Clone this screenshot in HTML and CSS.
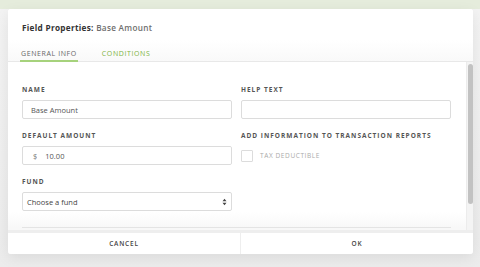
FILE: index.html
```html
<!DOCTYPE html>
<html lang="en">
<head>
    <meta charset="UTF-8">
    <meta name="viewport" content="width=device-width, initial-scale=1.0">
    <title>Field Properties</title>
    <link rel="stylesheet" href="styles.css">
</head>
<body>
<div class="backdrop">
    <div class="modal">
        <div class="modal-header">
            <h2><strong>Field Properties:</strong> Base Amount</h2>
            <div class="tabs">
                <span class="tab active">General Info</span>
                <span class="tab">Conditions</span>
            </div>
        </div>

        <div class="modal-body">
            <div class="content">
                <div class="form-grid">
                    <div class="form-group">
                        <label for="name">Name</label>
                        <input type="text" id="name" value="Base Amount">
                    </div>
                    <div class="form-group">
                        <label for="help">Help Text</label>
                        <input type="text" id="help" value="">
                    </div>
                    <div class="form-group">
                        <label for="amount">Default Amount</label>
                        <div class="money">
                            <span class="currency">$</span>
                            <input type="text" id="amount" value="10.00">
                        </div>
                    </div>
                    <div class="form-group">
                        <label>Add Information to Transaction Reports</label>
                        <div class="check">
                            <span class="box"></span>
                            <span class="check-text">Tax Deductible</span>
                        </div>
                    </div>
                    <div class="form-group">
                        <label for="fund">Fund</label>
                        <div class="select">
                            <span>Choose a fund</span>
                            <svg width="5" height="8" viewBox="0 0 5 8"><path d="M0.5 3.2 L2.5 0.8 L4.5 3.2 Z M0.5 4.8 L2.5 7.2 L4.5 4.8 Z" fill="#444"/></svg>
                        </div>
                    </div>
                </div>
                <div class="divider"></div>
            </div>
            <div class="scrollbar"><div class="thumb"></div></div>
        </div>

        <div class="modal-footer">
            <button type="button">Cancel</button>
            <button type="button">OK</button>
        </div>
    </div>
</div>
</body>
</html>
```

FILE: styles.css
```css
* {
    box-sizing: border-box;
}

body {
    margin: 0;
    font-family: 'Open Sans', sans-serif;
    background-color: #f1f1f1;
    width: 480px;
    height: 267px;
    overflow: hidden;
}

.backdrop {
    height: 267px;
    padding: 9px 7px 0 8px;
    background: linear-gradient(#e5ecdc 0, #e5ecdc 9px, #f3f3f3 9px, #ececec 100%);
}

.modal {
    width: 465px;
    height: 245px;
    background-color: #ffffff;
    border-radius: 3px;
    box-shadow: 0 4px 14px rgba(0, 0, 0, 0.08);
    display: flex;
    flex-direction: column;
    overflow: hidden;
}

.modal-header {
    height: 53px;
    padding: 13px 0 0 14px;
    border-bottom: 1px solid #e8e8e8;
    background: linear-gradient(#ffffff 60%, #f9f9f9);
}

h2 {
    margin: 0;
    font-size: 8.2px;
    line-height: 12px;
    font-weight: 600;
    color: #6e6e6e;
    letter-spacing: 0.3px;
}

h2 strong {
    color: #333333;
    font-weight: 700;
}

.tabs {
    display: flex;
    gap: 23px;
    margin-top: 15px;
    margin-left: -2px;
}

.tab {
    font-size: 7px;
    line-height: 10px;
    text-transform: uppercase;
    letter-spacing: 0.6px;
    color: #7cb342;
    padding: 0 1px 1px;
    border-bottom: 2px solid transparent;
}

.tab.active {
    color: #666666;
    border-bottom-color: #a6d27c;
}

.modal-body {
    flex: 1;
    display: flex;
}

.content {
    flex: 1;
    padding: 23px 15px 0 14px;
    background: linear-gradient(#ffffff 150px, #f8f8f8 166px);
}

.form-grid {
    display: grid;
    grid-template-columns: 210px 210px;
    column-gap: 9px;
    row-gap: 12px;
}

.form-group label {
    display: block;
    font-size: 6.5px;
    line-height: 10px;
    font-weight: 700;
    text-transform: uppercase;
    letter-spacing: 1px;
    color: #555555;
    margin-bottom: 5px;
    white-space: nowrap;
}

.form-group input {
    display: block;
    width: 100%;
    height: 19px;
    border: 1px solid #dcdcdc;
    border-radius: 2px;
    padding: 0 8px;
    font-family: 'Open Sans', sans-serif;
    font-size: 7.5px;
    color: #555555;
    outline: none;
}

.money {
    display: flex;
    align-items: center;
    height: 19px;
    border: 1px solid #dcdcdc;
    border-radius: 2px;
    padding-left: 10px;
}

.currency {
    font-size: 7.5px;
    color: #777777;
}

.money input {
    border: none;
    height: 17px;
    padding: 0 0 0 8px;
}

.check {
    display: flex;
    align-items: center;
    gap: 7px;
    height: 19px;
}

.box {
    width: 12px;
    height: 12px;
    border: 1px solid #dcdcdc;
    border-radius: 1px;
}

.check-text {
    font-size: 6.5px;
    text-transform: uppercase;
    letter-spacing: 0.6px;
    color: #aaaaaa;
}

.select {
    display: flex;
    align-items: center;
    justify-content: space-between;
    height: 19px;
    border: 1px solid #dcdcdc;
    border-radius: 2px;
    padding: 0 4px;
    font-size: 7.5px;
    color: #444444;
}

.divider {
    height: 1px;
    background-color: #e4e4e4;
    margin-top: 16px;
}

.scrollbar {
    width: 7px;
    margin-right: 1px;
    padding: 2px 0 0 1px;
    background-color: #f4f4f4;
    border-left: 1px solid #ececec;
}

.thumb {
    width: 5px;
    height: 140px;
    border-radius: 3px;
    background-color: #c2c2c2;
}

.modal-footer {
    display: grid;
    grid-template-columns: 1fr 1fr;
    column-gap: 1px;
    padding-top: 3px;
    background-color: #eeeeee;
}

.modal-footer button {
    height: 21px;
    border: none;
    background-color: #ffffff;
    font-family: 'Open Sans', sans-serif;
    font-size: 6.5px;
    font-weight: 600;
    text-transform: uppercase;
    letter-spacing: 0.8px;
    color: #444444;
    cursor: pointer;
}
```
